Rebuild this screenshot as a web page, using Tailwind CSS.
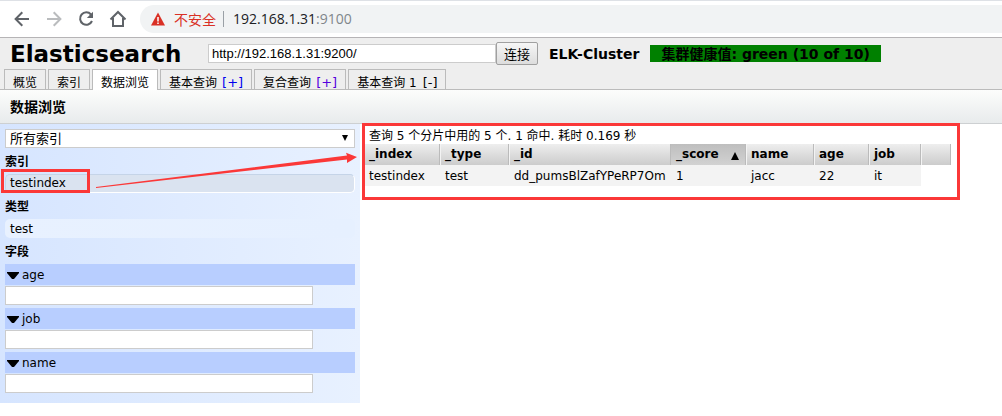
<!DOCTYPE html>
<html lang="zh-CN">
<head>
<meta charset="utf-8">
<meta name="viewport" content="width=device-width, initial-scale=1">
<title>Elasticsearch</title>
<script src="https://cdn.jsdelivr.net/npm/@tailwindcss/browser@4"></script>
</head>
<body class="min-h-screen bg-white font-['DejaVu_Sans','Noto_Sans_CJK_SC',sans-serif] text-[12px] leading-[18px] text-black">

<!-- Browser toolbar -->
<nav class="flex h-[38px] items-center border-t border-b border-t-[#dee1e6] border-b-[#b6b4b6] bg-white" aria-label="浏览器">
  <div class="flex w-[140px] shrink-0 items-center gap-2 pl-[10px]">
    <button type="button" aria-label="后退" class="h-6 w-6 text-[#5f6368]"><svg viewBox="0 0 24 24" class="h-6 w-6" fill="none" stroke="currentColor" stroke-width="2"><path d="M19 12H6M12.300 5.300L5.600 12l6.700 6.700"/></svg></button>
    <button type="button" aria-label="前进" class="h-6 w-6 text-[#babcbe]"><svg viewBox="0 0 24 24" class="h-6 w-6" fill="none" stroke="currentColor" stroke-width="2"><path d="M5 12h13M11.700 5.300l6.700 6.700-6.700 6.700"/></svg></button>
    <button type="button" aria-label="刷新" class="h-6 w-6 text-[#5f6368]"><svg viewBox="0 0 24 24" class="h-6 w-6" fill="none" stroke="currentColor" stroke-width="2"><path d="M17 7.500A6.200 6.200 0 1 0 18 14"/><path d="M19 4.800V11h-6.200z" fill="currentColor" stroke="none"/></svg></button>
    <button type="button" aria-label="主页" class="h-6 w-6 text-[#5f6368]"><svg viewBox="0 0 24 24" class="h-6 w-6" fill="none" stroke="currentColor" stroke-width="2"><path d="M4.500 12.500L12 5l7.500 7.500M7 11v8h10v-8"/></svg></button>
  </div>
  <div class="flex h-7 flex-1 items-center rounded-l-full bg-[#f1f3f4] pl-[10px]">
    <svg viewBox="0 0 16 16" class="h-4 w-4" aria-hidden="true"><path d="M8 1.500L15 14.500H1z" fill="#d93025"/><path d="M8 6v4.500M8 11.500v1.500" stroke="#fff" stroke-width="1.500"/></svg>
    <span class="ml-2 font-['Noto_Sans_CJK_SC',sans-serif] text-[14px] text-[#d93025]">不安全</span>
    <span class="mx-[7px] h-4 w-px bg-[#9aa0a6]"></span>
    <span class="ml-[2px] font-['Open_Sans',sans-serif] text-[14px] text-[#202124]">192.168.1.31<span class="text-[#80868b]">:9100</span></span>
  </div>
</nav>

<!-- Application header -->
<header class="bg-[#eeeeee]">
  <div class="flex h-[31px] items-center">
    <h1 class="w-[208px] shrink-0 pl-[10px] text-[23px] font-bold leading-7">Elasticsearch</h1>
    <form class="flex items-center">
      <input type="text" aria-label="集群地址" value="http://192.168.1.31:9200/" class="h-[19px] w-[288px] border border-[#cccccc] bg-white px-[3px] font-['Liberation_Sans',sans-serif] text-[13px]">
      <button type="button" class="h-[23px] w-[42px] rounded-[2px] border border-[#a0a0a0] bg-linear-to-b from-[#f6f6f6] to-[#dddddd] font-['Noto_Sans_CJK_SC',sans-serif] text-[13px] leading-5">连接</button>
    </form>
    <span class="ml-[11px] text-[14px] font-bold">ELK-Cluster</span>
    <span class="ml-[11px] flex h-[17px] items-center bg-[green] px-[11px] text-[14px] font-bold text-black">集群健康值: green (10 of 10)</span>
  </div>
  <div class="flex h-[21px] items-end gap-[2px] border-b border-[#bbbbbb] px-1">
    <button type="button" class="h-5 border border-b-0 border-[#bbbbbb] px-2 pt-[7px] leading-3">概览</button>
    <button type="button" class="h-5 border border-b-0 border-[#bbbbbb] px-2 pt-[7px] leading-3">索引</button>
    <button type="button" class="-mb-px h-[21px] border border-b-0 border-[#bbbbbb] bg-white px-2 pt-[7px] pb-px leading-3">数据浏览</button>
    <button type="button" class="flex h-5 gap-[5px] border border-b-0 border-[#bbbbbb] px-2 pt-[7px] leading-3">基本查询 <span class="text-[13px] text-[#0000ee]">[+]</span></button>
    <button type="button" class="flex h-5 gap-[5px] border border-b-0 border-[#bbbbbb] px-2 pt-[7px] leading-3">复合查询 <span class="text-[13px] text-[#5500dd]">[+]</span></button>
    <button type="button" class="flex h-5 gap-[6px] border border-b-0 border-[#bbbbbb] px-2 pt-[7px] leading-3">基本查询 1 <span class="text-[13px]">[-]</span></button>
  </div>
</header>

<h2 class="flex h-[34px] items-center border-b border-[#cdd0d2] bg-linear-to-b from-[#fcfdfc] to-[#e8ebec] px-[10px] text-[14px] font-bold">数据浏览</h2>

<main class="relative flex items-start">
  <aside class="w-[360px] shrink-0 bg-linear-to-r from-[#d6e5ff] to-[#e8f1ff] px-[5px] pt-[5px] pb-[10px]">
    <div class="grid items-center">
      <select aria-label="选择索引" class="col-start-1 row-start-1 h-[19px] w-full appearance-none border border-[#cccccc] bg-white pl-1 text-[13px] leading-4">
        <option>所有索引</option>
      </select>
      <svg viewBox="0 0 6 6" class="pointer-events-none col-start-1 row-start-1 mr-[7px] mb-[2px] h-[6px] w-[6px] justify-self-end" aria-hidden="true"><path d="M0 0h6L3 6z"/></svg>
    </div>
    <h3 class="mt-[5px] h-5 font-bold">索引</h3>
    <button type="button" class="mt-px block h-[19px] w-full rounded-[5px] border border-t-[#c5d4e8] border-r-white border-b-white border-l-[#c5d4e8] bg-[#dae3f0] pl-1 text-left leading-[17px]">testindex</button>
    <h3 class="mt-[5px] h-5 font-bold">类型</h3>
    <button type="button" class="mt-px block h-[19px] w-full rounded-[5px] bg-linear-to-r from-[#e8f1ff] to-[#e6f0ff] pl-[5px] text-left">test</button>
    <h3 class="mt-[5px] h-[21px] font-bold">字段</h3>
    <div class="flex flex-col gap-[3px]">
      <div>
        <button type="button" class="flex h-[21px] w-full items-center gap-[3px] bg-[#b8ceff] pl-[2px]"><svg viewBox="0 0 12 7" class="mt-[2px] h-[7px] w-3" aria-hidden="true"><path d="M0 0h12v1L7 7H5L0 1z"/></svg>age</button>
        <input type="text" aria-label="age" class="mt-px block h-[19px] w-[308px] border border-[#cccccc] bg-white px-1">
      </div>
      <div>
        <button type="button" class="flex h-[21px] w-full items-center gap-[3px] bg-[#b8ceff] pl-[2px]"><svg viewBox="0 0 12 7" class="mt-[2px] h-[7px] w-3" aria-hidden="true"><path d="M0 0h12v1L7 7H5L0 1z"/></svg>job</button>
        <input type="text" aria-label="job" class="mt-px block h-[19px] w-[308px] border border-[#cccccc] bg-white px-1">
      </div>
      <div>
        <button type="button" class="flex h-[21px] w-full items-center gap-[3px] bg-[#b8ceff] pl-[2px]"><svg viewBox="0 0 12 7" class="mt-[2px] h-[7px] w-3" aria-hidden="true"><path d="M0 0h12v1L7 7H5L0 1z"/></svg>name</button>
        <input type="text" aria-label="name" class="mt-px block h-[19px] w-[308px] border border-[#cccccc] bg-white px-1">
      </div>
    </div>
  </aside>

  <section class="-mt-px ml-[2px] h-[77px] w-[598px] border-[3px] border-[#fb3838]" aria-label="查询结果">
    <p class="flex h-[18px] items-center pt-px pl-1 whitespace-nowrap">查询 5 个分片中用的 5 个. 1 命中. 耗时 0.169 秒</p>
    <table class="w-[586px] table-fixed border-collapse text-left">
      <colgroup><col class="w-[75px]"><col class="w-[69px]"><col class="w-[162px]"><col class="w-[75px]"><col class="w-[68px]"><col class="w-[55px]"><col class="w-[52px]"><col class="w-[30px]"></colgroup>
      <thead class="leading-[21px]">
        <tr class="h-[21px]">
          <th scope="col" class="bg-linear-to-b from-[#eeeeee] to-[#cccccc] p-0"><div class="h-[21px] border-r border-[#bbbbbb] pl-1">_index</div></th>
          <th scope="col" class="bg-linear-to-b from-[#eeeeee] to-[#cccccc] p-0"><div class="h-[21px] border-r border-l border-r-[#bbbbbb] border-l-[#f3f3f3] pl-1">_type</div></th>
          <th scope="col" class="bg-linear-to-b from-[#eeeeee] to-[#cccccc] p-0"><div class="h-[21px] border-r border-l border-r-[#bbbbbb] border-l-[#f3f3f3] pl-1">_id</div></th>
          <th scope="col" aria-sort="ascending" class="bg-linear-to-b from-[#bebebe] to-[#d2d2d2] p-0"><div class="flex h-[21px] items-start justify-between border-r border-[#bbbbbb] pr-[6px] pl-[5px]">_score<svg viewBox="0 0 8 8" class="mt-2 h-2 w-2" aria-hidden="true"><path d="M4 0l4 8H0z"/></svg></div></th>
          <th scope="col" class="bg-linear-to-b from-[#eeeeee] to-[#cccccc] p-0"><div class="h-[21px] border-r border-l border-r-[#bbbbbb] border-l-[#f3f3f3] pl-1">name</div></th>
          <th scope="col" class="bg-linear-to-b from-[#eeeeee] to-[#cccccc] p-0"><div class="h-[21px] border-r border-l border-r-[#bbbbbb] border-l-[#f3f3f3] pl-1">age</div></th>
          <th scope="col" class="bg-linear-to-b from-[#eeeeee] to-[#cccccc] p-0"><div class="h-[21px] border-r border-l border-r-[#bbbbbb] border-l-[#f3f3f3] pl-1">job</div></th>
          <td class="bg-linear-to-b from-[#eeeeee] to-[#cccccc] p-0"><div class="h-[21px] border-r border-l border-r-[#bbbbbb] border-l-[#f3f3f3]"></div></td>
        </tr>
      </thead>
      <tbody>
        <tr class="h-[21px]">
          <td class="bg-[#f3f3f3] p-0 pl-1">testindex</td>
          <td class="bg-[#f3f3f3] p-0 pl-[5px]">test</td>
          <td class="bg-[#f3f3f3] p-0 pl-[5px]">dd_pumsBlZafYPeRP7Om</td>
          <td class="bg-[#f3f3f3] p-0 pl-[5px]">1</td>
          <td class="bg-[#f3f3f3] p-0 pl-[5px]">jacc</td>
          <td class="bg-[#f3f3f3] p-0 pl-[5px]">22</td>
          <td class="bg-[#f3f3f3] p-0 pl-[5px]">it</td>
          <td class="p-0"></td>
        </tr>
      </tbody>
    </table>
  </section>

  <!-- Highlight drawn around the selected index, with an arrow to its results -->
  <div class="pointer-events-none absolute top-[45px] left-px h-6 w-[89px] border-[3px] border-[#fb3838]"></div>
  <svg viewBox="0 0 262 40" class="pointer-events-none absolute top-[26px] left-[96px] h-10 w-[262px]" aria-hidden="true"><path d="M0 37L251 5.500L250 2.700L261 7L251 13V9.500L0 38z" fill="#fb3838"/></svg>
</main>
</body>
</html>
